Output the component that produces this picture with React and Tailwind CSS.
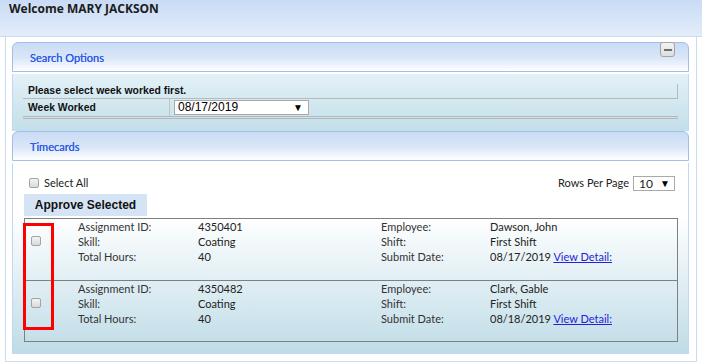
import React from "react";

const rows = [
  { id: "4350401", skill: "Coating", hours: "40", employee: "Dawson, John", shift: "First Shift", date: "08/17/2019" },
  { id: "4350482", skill: "Coating", hours: "40", employee: "Clark, Gable", shift: "First Shift", date: "08/18/2019" },
];

function Box() {
  return (
    <span className="block w-[10px] h-[10px] rounded-[2px] border border-[#a3a3a3] bg-gradient-to-b from-[#f4f4f4] to-[#d9d9d9]" />
  );
}

function PanelHeader({ title, children }) {
  return (
    <div className="relative h-[30px] rounded-t-[6px] border border-[#a3bfe8] bg-[linear-gradient(to_bottom,#c9dbf4_0%,#dbe7f8_55%,#f7fafe_90%,#ffffff_100%)] pl-[17px] flex items-center pt-[2px]">
      <span className="text-[11px] text-[#2f5ce8] font-['Lato',sans-serif] [text-shadow:0_0_0.3px_#2f5ce8]">{title}</span>
      {children}
    </div>
  );
}

export default function App() {
  return (
    <div className="w-[702px] h-[363px] bg-white overflow-hidden font-['Lato',sans-serif] text-[#222]">
      {/* ── top bar ───────────────────────────── */}
      <div className="h-[37px] border-b border-[#c9dcf4] bg-gradient-to-b from-[#c9dbf5] to-[#e3edfa] pl-[9px] pt-0">
        <div className="text-[12px] leading-[18px] font-bold text-[#1b1b1b] font-['Open_Sans',sans-serif]">
          Welcome MARY JACKSON
        </div>
      </div>

      {/* ── outer box ─────────────────────────── */}
      <div className="ml-[5px] w-[692px] h-[325px] border-x border-b border-[#cadcf3] pl-[6px] pr-[7px] pt-[5px]">
        {/* Search Options */}
        <PanelHeader title="Search Options">
          <span className="absolute right-[13px] top-[-1px] w-[15px] h-[15px] rounded-[3px] border border-[#a4a4a4] bg-gradient-to-b from-[#f3f3f3] to-[#dedede] flex items-center justify-center">
            <span className="block w-[8px] h-[2px] bg-[#6f6f6f]" />
          </span>
        </PanelHeader>
        <div className="mt-[2px] h-[57px] border-x border-[#c2d8f0] bg-gradient-to-b from-[#e3f1f7] to-[#c3dfe9] pl-[10px] pr-[10px] pt-[10px] font-['Liberation_Sans',Arial,sans-serif]">
          <div className="h-[15px] border-b border-r border-[#b9b9b9] pl-[5px] text-[10.4px] font-bold leading-[13px] text-[#111]">
            Please select week worked first.
          </div>
          <div className="flex h-[20px] border-b-[3px] border-double border-[#b5b5b5]">
            <div className="w-[147px] border-r border-[#c4c4c4] pl-[5px] text-[10.4px] font-bold leading-[17px] text-[#111]">
              Week Worked
            </div>
            <div className="ml-[4px] mt-[1px] w-[135px] h-[15px] border border-[#a9a9a9] bg-white flex items-center justify-between pl-[3px] pr-[5px]">
              <span className="text-[12px] leading-[13px] text-black">08/17/2019</span>
              <span className="text-[10px] leading-[10px] text-black">▼</span>
            </div>
          </div>
        </div>

        {/* Timecards */}
        <PanelHeader title="Timecards" />
        <div className="mt-[2px] h-[191px] border-x border-b border-[#c2d8f0] bg-[linear-gradient(to_bottom,#ffffff_0%,#ffffff_28%,#bfdce7_100%)] pl-[11px] pr-[10px] pt-[13px]">
          <div className="flex h-[14px] items-center justify-between">
            <label className="flex items-center pl-[5px] gap-[5px] text-[11px] text-[#222]">
              <Box />
              <span>Select All</span>
            </label>
            <div className="flex items-center gap-[4px] mr-[3px]">
              <span className="text-[11px] text-[#222]">Rows Per Page</span>
              <div className="w-[42px] h-[15px] border border-[#a9a9a9] bg-white flex items-center justify-between pl-[5px] pr-[4px]">
                <span className="text-[12px] leading-[13px]">10</span>
                <span className="text-[10px] leading-[10px] text-black">▼</span>
              </div>
            </div>
          </div>

          <button className="mt-[4px] w-[123px] h-[22px] bg-[#d5e4f5] text-[12px] font-bold text-[#111] font-['Liberation_Sans',Arial,sans-serif] flex items-center justify-center">
            Approve Selected
          </button>

          <div className="relative mt-[2px] w-[654px] border border-[#7f7f7f]">
            {rows.map((r, i) => (
              <div
                key={r.id}
                className={`flex items-start h-[61px] pl-[6px] text-[11px] leading-[15px] ${i > 0 ? "border-t border-[#7f7f7f]" : ""}`}
              >
                <div className="w-[47px] h-[43px] flex items-center">
                  <Box />
                </div>
                <div className="grid content-start grid-cols-[120px_183px_109px_1fr]">
                  <span className="text-[#333]">Assignment ID:</span>
                  <span>{r.id}</span>
                  <span className="text-[#333]">Employee:</span>
                  <span>{r.employee}</span>
                  <span className="text-[#333]">Skill:</span>
                  <span>{r.skill}</span>
                  <span className="text-[#333]">Shift:</span>
                  <span>{r.shift}</span>
                  <span className="text-[#333]">Total Hours:</span>
                  <span>{r.hours}</span>
                  <span className="text-[#333]">Submit Date:</span>
                  <span>
                    {r.date}{" "}
                    <a href="#" className="text-[#2222dd] underline">View Detail:</a>
                  </span>
                </div>
              </div>
            ))}
            {/* highlight around the checkboxes */}
            <div className="absolute left-[-2px] top-[4px] w-[31px] h-[107px] border-[3px] border-[#ff0000]" />
          </div>
        </div>
      </div>
    </div>
  );
}
